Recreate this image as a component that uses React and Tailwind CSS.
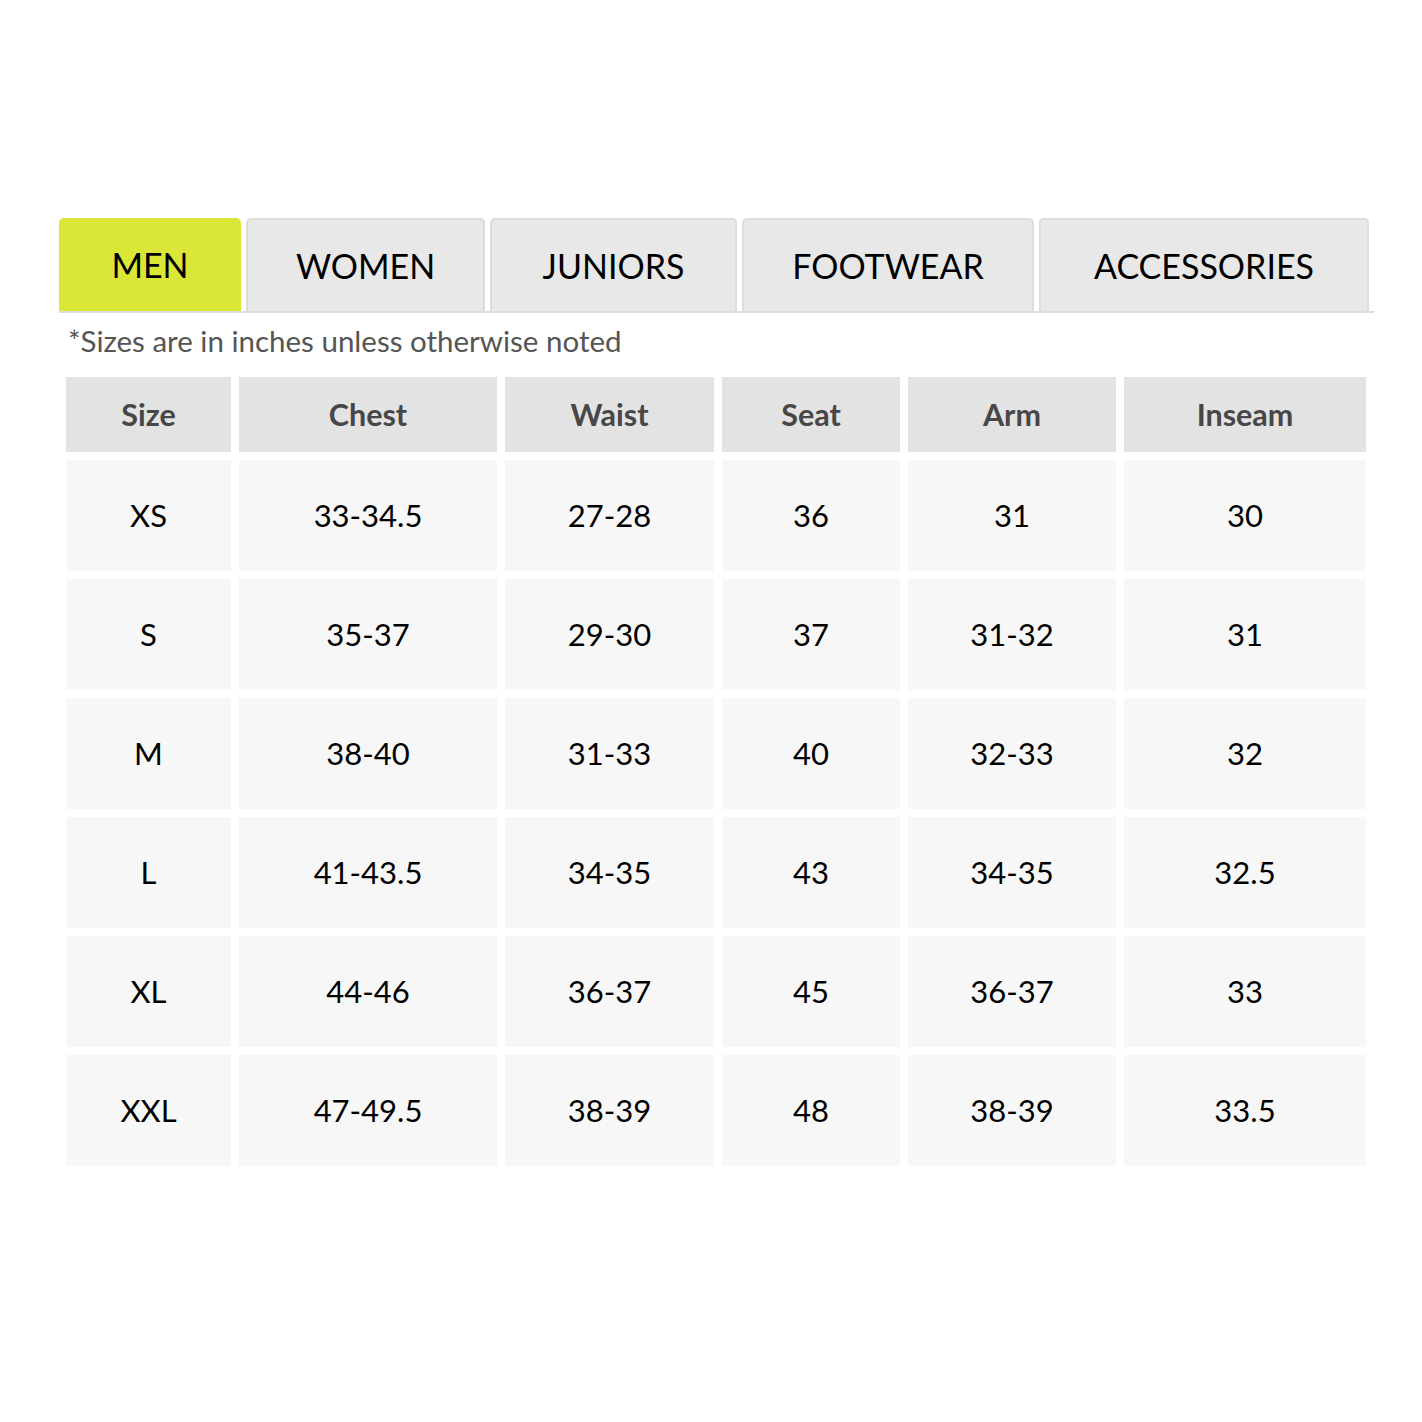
import React from "react";

const tabs = [
  { label: "MEN", w: "w-[182px]", active: true },
  { label: "WOMEN", w: "w-[239px]" },
  { label: "JUNIORS", w: "w-[247px]" },
  { label: "FOOTWEAR", w: "w-[292px]" },
  { label: "ACCESSORIES", w: "w-[330px]" },
];

const headers = [
  ["Size", "w-[165px]"],
  ["Chest", "w-[258px]"],
  ["Waist", "w-[209px]"],
  ["Seat", "w-[178px]"],
  ["Arm", "w-[208px]"],
  ["Inseam", "w-[242px]"],
];

const rows = [
  ["XS", "33-34.5", "27-28", "36", "31", "30"],
  ["S", "35-37", "29-30", "37", "31-32", "31"],
  ["M", "38-40", "31-33", "40", "32-33", "32"],
  ["L", "41-43.5", "34-35", "43", "34-35", "32.5"],
  ["XL", "44-46", "36-37", "45", "36-37", "33"],
  ["XXL", "47-49.5", "38-39", "48", "38-39", "33.5"],
];

export default function App() {
  return (
    <div className="w-[1422px] h-[1422px] bg-white font-['Lato',sans-serif]">
      <div className="pt-[218px] pl-[59px] w-[1374px]">
        <div className="flex gap-[5px] border-b-2 border-[#dedede]">
          {tabs.map((t) => (
            <div
              key={t.label}
              className={`${t.w} h-[93px] flex items-center justify-center rounded-t-[5px] text-[34px] text-black ${
                t.active
                  ? "bg-[#dbe737]"
                  : "bg-[#e8e8e8] border-t-2 border-x-2 border-[#dcdcdc]"
              }`}
            >
              {t.label}
            </div>
          ))}
        </div>
        <div className="pl-[9px] pt-[11px] text-[29.5px] text-[#555555] leading-[34px]">
          *Sizes are in inches unless otherwise noted
        </div>
        <table className="border-separate border-spacing-[8px] -ml-[1px] mt-[11px]">
          <thead>
            <tr>
              {headers.map(([h, w]) => (
                <th
                  key={h}
                  className={`${w} h-[75px] bg-[#e3e3e3] text-[30.5px] font-bold text-[#474747] text-center p-0`}
                >
                  {h}
                </th>
              ))}
            </tr>
          </thead>
          <tbody>
            {rows.map((r) => (
              <tr key={r[0]}>
                {r.map((c, i) => (
                  <td
                    key={i}
                    className="h-[111px] bg-[#f7f7f7] text-[31px] text-black text-center p-0"
                  >
                    {c}
                  </td>
                ))}
              </tr>
            ))}
          </tbody>
        </table>
      </div>
    </div>
  );
}
